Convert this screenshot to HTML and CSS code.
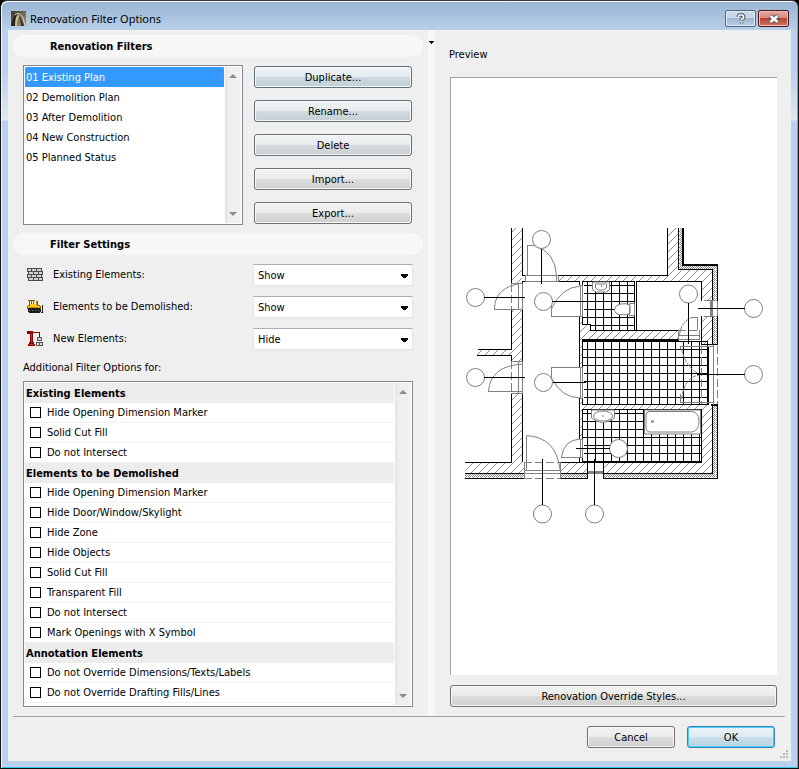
FILE: index.html
```
<!DOCTYPE html>
<html lang="en">
<head>
<meta charset="utf-8">
<title>Renovation Filter Options</title>
<link rel="stylesheet" href="styles.css">
</head>
<body>
<main class="window">
  <header class="titlebar">
    <svg class="app-icon" viewBox="0 0 15 15" aria-hidden="true">
      <defs><linearGradient id="app" x2="1" y2="1"><stop offset="0" stop-color="#3c3630"/><stop offset=".5" stop-color="#75684f"/><stop offset="1" stop-color="#a3977c"/></linearGradient></defs>
      <path fill="url(#app)" d="M0 0h15v15H0z"/>
      <path fill="#28231e" d="M0 15C1 8 3 3 7 3c-2 3-3 8-3 12z"/>
      <path fill="#c9bb96" d="M4 15C4 9 5 5 7 3c1 1 1 2 1 3-1 2-2 5-2 9z"/>
      <path fill="#3a332a" d="M8 5c2 2 4 6 5 10h-3C10 11 9 8 8 5z"/>
      <path fill="none" stroke="#e6dcc0" d="M4 4c2-2 4-2 6 0s3 6 4 11"/>
    </svg>
    <h1 class="title">Renovation Filter Options</h1>
    <button class="caption-button" type="button" aria-label="Help">
      <svg viewBox="0 0 12 12" aria-hidden="true"><path d="M3.500 4V3l1-1h3l1 1v2L6.500 6.500v1M6.500 9.500v1" fill="none" stroke="#4d5568" stroke-width="3.600"/><path d="M3.500 4V3l1-1h3l1 1v2L6.500 6.500v1M6.500 9.500v1" fill="none" stroke="#fff" stroke-width="1.600"/></svg>
    </button>
    <button class="caption-button caption-close" type="button" aria-label="Close">
      <svg viewBox="0 0 12 12" aria-hidden="true"><path d="M2 3l8 6M10 3l-8 6" fill="none" stroke="#5a5261" stroke-width="4.800"/><path d="M2.500 3l7 6M9.500 3l-7 6" fill="none" stroke="#fff" stroke-width="2.600"/></svg>
    </button>
  </header>

  <form class="client">
    <div class="panes">
      <section class="settings">
        <h2 class="section-title">Renovation Filters</h2>
        <div class="filters">
          <div class="listbox">
            <select class="filter-list" size="7" aria-label="Renovation Filters">
              <option selected>01 Existing Plan</option>
              <option>02 Demolition Plan</option>
              <option>03 After Demolition</option>
              <option>04 New Construction</option>
              <option>05 Planned Status</option>
            </select>
            <div class="scrollbar" aria-hidden="true">
              <svg viewBox="0 0 8 4"><path class="arrow" d="M4 0l4 4H0z"/></svg>
              <svg viewBox="0 0 8 4"><path class="arrow" d="M0 0h8L4 4z"/></svg>
            </div>
          </div>
          <div class="actions">
            <button class="button button-hot" type="button">Duplicate...</button>
            <button class="button button-warm" type="button">Rename...</button>
            <button class="button button-mild" type="button">Delete</button>
            <button class="button" type="button">Import...</button>
            <button class="button" type="button">Export...</button>
          </div>
        </div>

        <h2 class="section-title">Filter Settings</h2>
        <div class="statuses">
          <div class="status">
            <svg class="status-icon" viewBox="0 0 16 16" shape-rendering="crispEdges" aria-hidden="true">
              <path fill="#4a4a4a" d="M0 1h15v4H0zM1 4h15v4H1zM0 7h15v4H0zM1 10h15v4H1z"/>
              <path fill="#d2d2d2" d="M1 2h3v2H1zM5 2h4v2H5zM10 2h4v2h-4zM2 5h4v2H2zM7 5h4v2H7zM12 5h3v2h-3zM1 8h3v2H1zM5 8h4v2H5zM10 8h4v2h-4zM2 11h4v2H2zM7 11h4v2H7zM12 11h3v2h-3z"/>
            </svg>
            <label for="existing">Existing Elements:</label>
            <select class="dropdown" id="existing"><option selected>Show</option><option>Hide</option></select>
          </div>
          <div class="status">
            <svg class="status-icon" viewBox="0 0 16 16" shape-rendering="crispEdges" aria-hidden="true">
              <path fill="#8a5d00" d="M1 1h7v1H7v3h2V2h2v4h2v1h1v3H0V7h1V6h1V2H1z"/>
              <path fill="#ffc726" d="M1 7h12v2H1zM3 5h7v2H3z"/>
              <path fill="#fff3c0" d="M3 2h1v3H3zM5 2h1v3H5z"/>
              <path fill="#c98c00" d="M9 3h1v3H9zM2 8h11v1H2z"/>
              <path fill="#1c1c1c" d="M1 9h12v1h1v3h-1v1H2v-1H1zM15 6h1v8h-2v-1h1z"/>
              <path fill="#777" d="M2 11h1v1H2zM5 11h1v1H5zM8 11h1v1H8zM11 11h1v1h-1z"/>
            </svg>
            <label for="demolished">Elements to be Demolished:</label>
            <select class="dropdown" id="demolished"><option selected>Show</option><option>Hide</option></select>
          </div>
          <div class="status">
            <svg class="status-icon" viewBox="0 0 16 16" shape-rendering="crispEdges" aria-hidden="true">
              <path fill="#8e0000" d="M0 0h6v1h7v5h-1V2H6v9h1v2h1v2H1v-2h1v-2h1V3H0z"/>
              <path fill="#f01818" d="M4 2h1v10H4zM2 13h5v1H2z"/>
              <path fill="#555" d="M10 6h5v4h-5zM9 11h7v4H9z"/>
              <path fill="#d8d8d8" d="M11 7h3v2h-3zM10 12h2v2h-2zM13 12h2v2h-2z"/>
            </svg>
            <label for="new">New Elements:</label>
            <select class="dropdown" id="new"><option>Show</option><option selected>Hide</option></select>
          </div>
        </div>

        <p class="options-label">Additional Filter Options for:</p>
        <div class="listbox options-box">
          <div class="options">
            <h3 class="group">Existing Elements</h3>
            <label class="option"><input type="checkbox">Hide Opening Dimension Marker</label>
            <label class="option"><input type="checkbox">Solid Cut Fill</label>
            <label class="option"><input type="checkbox">Do not Intersect</label>
            <h3 class="group">Elements to be Demolished</h3>
            <label class="option"><input type="checkbox">Hide Opening Dimension Marker</label>
            <label class="option"><input type="checkbox">Hide Door/Window/Skylight</label>
            <label class="option"><input type="checkbox">Hide Zone</label>
            <label class="option"><input type="checkbox">Hide Objects</label>
            <label class="option"><input type="checkbox">Solid Cut Fill</label>
            <label class="option"><input type="checkbox">Transparent Fill</label>
            <label class="option"><input type="checkbox">Do not Intersect</label>
            <label class="option"><input type="checkbox">Mark Openings with X Symbol</label>
            <h3 class="group">Annotation Elements</h3>
            <label class="option"><input type="checkbox">Do not Override Dimensions/Texts/Labels</label>
            <label class="option"><input type="checkbox">Do not Override Drafting Fills/Lines</label>
          </div>
          <div class="scrollbar" aria-hidden="true">
            <svg viewBox="0 0 8 4"><path class="arrow" d="M4 0l4 4H0z"/></svg>
            <svg viewBox="0 0 8 4"><path class="arrow" d="M0 0h8L4 4z"/></svg>
          </div>
        </div>
      </section>

      <div class="splitter" aria-hidden="true">
        <svg viewBox="0 0 5 3" shape-rendering="crispEdges"><path d="M0 0h5v1H0zM1 1h3v1H1zM2 2h1v1H2z"/></svg>
      </div>

      <section class="preview">
        <h2 class="preview-title">Preview</h2>
        <div class="canvas">
          <svg class="plan" viewBox="464 228 301 297" role="img" aria-label="Floor plan">
            <defs>
              <pattern id="hatch" width="8" height="8" patternUnits="userSpaceOnUse"><path d="M-1 9L9-1M-1 1L1-1M7 9l2-2" stroke="#909090" stroke-width="1" shape-rendering="crispEdges"/></pattern>
              <pattern id="insulation" width="4" height="4" patternUnits="userSpaceOnUse"><path fill="#8c8c8c" d="M0 0h1v1H0zM2 0h1v1H2zM1 1h1v1H1zM2 2h1v1H2zM0 2h1v1H0zM3 3h1v1H3zM1 3h1v1H1z"/></pattern>
              <pattern id="tiles" x="587" y="285" width="8" height="8" patternUnits="userSpaceOnUse"><path d="M0 0h8v1H0zM0 0h1v8H0z"/></pattern>
            </defs>
            <g shape-rendering="crispEdges">
              <g fill="url(#hatch)">
                <path d="M511 228h11v55h-11zM511 310h11v51h-11zM511 394h11v69h-11zM477 349h34v6h-34z"/>
                <path d="M558 275h110v6H558zM667 228h11v41h34v32h-11v-20h-34zM701 316h11v29h-11v-15"/>
                <path d="M579 317h3v7h8v6h88v10h-96v27h-3zM579 398h3v6h120v-59h0v59h10v69H603v-11h98v-53H582v30h-3zM466 463h58v10h-58zM561 463h26v10h-26z"/>
              </g>
              <path fill="#fff" d="M702 346h6v58h-6z"/>
              <g fill="url(#insulation)">
                <path d="M679 228h4v37h34v36h-4v-31h-34zM713 316h4v29h-4zM713 405h4v73H603v-4h110zM465 474h60v4h-60zM561 474h26v4h-26z"/>
              </g>
              <path fill="url(#tiles)" d="M583 282h52v48h-45v-6h-7zM583 341h125v63H583zM583 410h118v51H583z"/>
              <g fill="none" stroke="#000">
                <path d="M511.500 228v55M511.500 310v39h-34M477 355.500h34.500V361M511.500 394v68.500H465M522.500 228v47.500h3M525 281.500h-3v2M522.500 310v51M522.500 394v68"/>
                <path d="M558.500 275.500h109V228M557 281.500h22.500v3M579.500 317v50M579.500 398v41M579.500 457v5M678.500 228v41.500h34V301"/>
                <path d="M582.500 285v-3.500h52V330M636.500 281.500h65v19M636.500 281v49M582.500 317v7.500h8v6h88M582.500 367v-26.500h96M582.500 398v6.500h126M582.500 439v-29.500h119v52H582v-4M636 330.500h42M701.500 316v28.500h16V316M712.500 316v28M717.500 301V264"/>
                <path d="M465 473.500h60M465 478.500h60M561 462.500h26v16h-26M561 473.500h26M603 478.500h114.500v-74M603 473.500h109.500v-69h5M603.500 478v-16h98"/>
                <path stroke-width="2" d="M683 228v37h35M582 340h97M708 346v59M582 462h120M711 405h7"/>
              </g>
              <path fill="#fff" d="M580 285h4v32h-4zM580 367h4v31h-4zM580 439h4v18h-4z"/>
              <g fill="none" stroke="#808080">
                <path d="M525.500 275.500h33v6h-33zM556.500 275v6M518.500 283v27M522.500 283v27M511 283.500h11M494 309.500h28M518.500 361v33M522.500 361v33M511 361.500h11M488 391.500h34M511 393.500h11"/>
                <path d="M580.500 285.500h2v31h-2zM580.500 367.500h2v31h-2zM580.500 439.500h2v18h-2zM551.500 304v12.500h31M551.500 379v-11.500h31M561 457.500h21"/>
                <path d="M527.500 275v-29.500h9M526.500 470v-34.500M524.500 462v16M560.500 462v16M524 470.500h36M524 473.500h37"/>
                <path d="M697.500 330v-12.500h-7M678.500 330v9.500h21V330M678 335.500h21M680.500 349v-2.500h33M680.500 394v8.500h33M713.500 345v60M717.500 301v15M704 300.500h10M704 316.500h10"/>
                <path stroke-dasharray="8 3" d="M511.500 284v26M511.500 361v33M524 462.500h37M524 478.500h37M701.500 346v58M717.500 346v58M678 330.500h21"/>
                <path stroke-width="3" d="M711.500 301v15M588 472.500h15"/>
              </g>
            </g>
            <g fill="none" stroke="#808080">
              <path d="M535 246q20 6 21.500 29M494.500 309q0-22 28-26M488.500 391q2-25 34-27M551.500 309q10-22 29-23M551.500 378q10 20 29 20M526.500 435.500q30 2 33.500 34M561.500 457q2-17 19-18"/>
              <path stroke-dasharray="4 1" d="M679.500 335q2-14 12-17M681.500 349q5 20 18 25M681.500 399q3-22 18-24"/>
            </g>
            <g fill="#fff" stroke="#808080">
              <path d="M592.500 282v8l4 2h9l4-2v-8z"/><path d="M595.500 284h11v4l-3 2h-5l-3-2z"/><path d="M601.500 285v2"/>
              <path d="M591.500 410v8q11 9 23 0v-8z"/><ellipse cx="603" cy="416" rx="9.500" ry="5"/><path d="M602 416h2"/>
              <path d="M629.500 303.500h5v12h-5zM630 305.500q-4-3-11-1-4 1-4.500 5 0 4 4.500 5 7 1 11-1z"/>
              <path d="M644.500 410h56v24h-56z"/><path d="M649 411.500h43q7 1 7 10t-7 10.500h-43q-3-1-3-4v-13q0-3 3-3.500z"/>
              <path d="M651 421.500h3" stroke-width="2"/>
              <circle cx="541.500" cy="239.500" r="9"/><circle cx="475.500" cy="297.500" r="9"/><circle cx="543.500" cy="301.500" r="9"/><circle cx="688.500" cy="294" r="9"/><circle cx="753.500" cy="308.500" r="9"/><circle cx="475.500" cy="377.500" r="9"/><circle cx="543.500" cy="382.500" r="9"/><circle cx="753.500" cy="374.500" r="9"/><circle cx="618.500" cy="448.500" r="9"/><circle cx="542.500" cy="514" r="9"/><circle cx="594.500" cy="514" r="9"/>
            </g>
            <g fill="none" stroke="#000" shape-rendering="crispEdges">
              <path d="M541.500 249v35M484 297.500h41M552 301.500h34M688.500 303v41M698 308.500h47M484 377.500h41M553 382.500h33M700 374.500h45M576 448.500h34M542.500 459v46M594.500 459v46"/>
              <path stroke-width="2" d="M697 374h4"/>
            </g>
          </svg>
        </div>
        <button class="button" type="button">Renovation Override Styles...</button>
      </section>
    </div>

    <footer class="footer">
      <button class="button" type="button">Cancel</button>
      <button class="button button-default" type="submit">OK</button>
      <svg class="grip" viewBox="0 0 8 8" shape-rendering="crispEdges" aria-hidden="true"><path fill="#b8b8b8" d="M6 0h2v2H6zM3 3h2v2H3zM6 3h2v2H6zM0 6h2v2H0zM3 6h2v2H3zM6 6h2v2H6z"/></svg>
    </footer>
  </form>
</main>
</body>
</html>
```
FILE: styles.css
```
* {
  box-sizing: border-box;
}

body {
  margin: 0;
  background: #000;
  color: #000;
  font: 11px/20px "DejaVu Sans Condensed", "DejaVu Sans", sans-serif;
}

h1,
h2,
h3,
p {
  margin: 0;
  font-size: inherit;
}

button,
select,
input {
  margin: 0;
  color: inherit;
  font: inherit;
}

/* Window frame */
.window {
  display: flex;
  flex-direction: column;
  min-height: 100vh;
  padding: 0 7px 7px;
  border: 1px solid #111;
  border-top-color: #3a3a42;
  border-radius: 7px 7px 0 0;
  background: linear-gradient(#98b4d2 0, #b9d1ea 30px, #b9d1ea 70px, #dde9f5 119px, #b9d1ea 120px);
  box-shadow: inset 1px 1px #f4f8fc, inset -1px -1px #35c5e0;
}

.titlebar {
  display: flex;
  align-items: center;
  gap: 2px;
  height: 29px;
  padding: 6px 2px 0 3px;
}

.app-icon {
  width: 15px;
  height: 15px;
}

.title {
  flex: 1;
  padding-left: 2px;
  font: 11px/16px "Noto Sans", "Open Sans", sans-serif;
}

.caption-button {
  display: grid;
  place-items: center;
  width: 31px;
  height: 17px;
  padding: 0;
  border: 1px solid #56687f;
  border-radius: 2px;
  background: linear-gradient(#c6d7e9 50%, #9fb9d4 50%, #b9cee4);
  box-shadow: inset 0 0 0 1px #dfeaf5;
}

.caption-close {
  border-color: #4a1520;
  background: linear-gradient(#e5a79c, #d88a7c 50%, #b8402c 50%, #d07c64);
  box-shadow: inset 0 0 0 1px #ecc0b6;
}

.caption-button svg {
  width: 12px;
  height: 12px;
}

.client {
  display: flex;
  flex: 1;
  flex-direction: column;
  background: #efefef;
}

.panes {
  display: grid;
  flex: 1;
  grid-template-columns: 420fr 7px 356fr;
}

/* Left pane */
.settings {
  display: flex;
  flex-direction: column;
  padding: 5px 5px 9px;
}

.section-title {
  padding: 1px 0 0 37px;
  border-radius: 11px;
  background: #f7f7f7;
  font-weight: bold;
  line-height: 21px;
}

.filters {
  display: grid;
  grid-template-columns: 220fr 158fr;
  gap: 11px;
  padding: 8px 11px 8px 10px;
}

.listbox {
  display: flex;
  padding: 1px;
  border: 1px solid #828790;
  background: #fff;
}

.filter-list {
  flex: 1;
  min-width: 0;
  height: 156px;
  padding: 0;
  border: 0;
  outline: 0;
  background: #fff;
  overflow: hidden;
}

.filter-list option {
  min-height: 20px;
  padding: 4px 1px 0;
}

.filter-list option:checked {
  outline: 1px dotted #d0802c;
  outline-offset: -1px;
  background: linear-gradient(#3399ff, #3399ff);
  color: #fff;
}

.scrollbar {
  display: flex;
  flex-direction: column;
  justify-content: space-between;
  align-items: center;
  width: 17px;
  padding: 7px 0;
  border-left: 1px solid #fff;
  background: linear-gradient(90deg, #e3e3e3, #efefef 4px, #f0f0f0 14px, #f7f7f7);
}

.scrollbar svg {
  width: 8px;
  height: 4px;
}

.arrow {
  fill: #8a8a8a;
}

.actions {
  display: flex;
  flex-direction: column;
  gap: 12px;
  padding-top: 1px;
}

.button {
  height: 22px;
  padding: 1px 8px 0;
  border: 1px solid #707070;
  border-radius: 3px;
  background: linear-gradient(#f2f2f2, #ebebeb 50%, #dddddd 50%, #cfcfcf);
  box-shadow: inset 0 0 0 1px #f8f8f8;
  line-height: 19px;
}

.button-hot {
  border-color: #5c6f7b;
  background: linear-gradient(#eff4f6, #e2ebef 50%, #cddbe1 50%, #bfd0d7);
}

.button-warm {
  border-color: #627078;
  background: linear-gradient(#f0f4f5, #e5ebed 50%, #d2dbdf 50%, #c4cfd4);
}

.button-mild {
  border-color: #687075;
  background: linear-gradient(#f1f3f4, #e8ebec 50%, #d8dcde 50%, #cacfd1);
}

.button-default {
  border-color: #3c7fb1;
  background: linear-gradient(#eaf3f8, #deebf3 50%, #c9dfec 50%, #b8d4e4);
  box-shadow: inset 0 0 0 1px #46d4fa;
}

.statuses {
  display: flex;
  flex-direction: column;
  gap: 10px;
  padding: 9px 10px 0 14px;
}

.status {
  display: grid;
  grid-template-columns: 26px 200fr 160fr;
  align-items: center;
}

.status label {
  line-height: 22px;
}

.status-icon {
  width: 16px;
  height: 16px;
}

.dropdown {
  width: 100%;
  height: 22px;
  padding: 1px 4px 0;
  border: 1px solid #e2e3ea;
  border-top-color: #abadb3;
  border-radius: 0;
  appearance: none;
  background:
    linear-gradient(#000, #000) right 4px top 9px / 7px 2px no-repeat,
    linear-gradient(#000, #000) right 5px top 11px / 5px 1px no-repeat,
    linear-gradient(#000, #000) right 6px top 12px / 3px 1px no-repeat,
    #fff;
}

.options-label {
  padding: 8px 10px 3px;
}

.options-box {
  flex: 1;
  margin: 0 10px;
}

.options {
  flex: 1;
}

.group {
  height: 20px;
  padding: 1px 0 0 1px;
  background: #ececec;
  line-height: 19px;
}

.option {
  display: flex;
  align-items: center;
  gap: 6px;
  height: 20px;
  padding-left: 5px;
  border-bottom: 1px solid #f0f0f0;
  line-height: 18px;
}

.option input {
  width: 11px;
  height: 11px;
  border: 1px solid #000;
  appearance: none;
  background: #fff;
}

.option input:checked {
  background: #3399ff;
}

.splitter {
  padding-top: 9px;
  background: #f7f7f7;
  text-align: center;
  line-height: 3px;
}

.splitter svg {
  width: 5px;
  height: 3px;
}

/* Right pane */
.preview {
  display: flex;
  flex-direction: column;
  padding: 15px 14px 9px 15px;
}

.preview-title {
  margin-left: -1px;
  font-weight: normal;
}

.canvas {
  display: flex;
  flex: 1;
  align-items: center;
  justify-content: center;
  margin: 12px 0 10px;
  border: solid #a0a0a0;
  border-width: 1px 0 0 1px;
  background: #fff;
}

.plan {
  width: 95%;
  max-width: 301px;
}

/* Footer */
.footer {
  display: flex;
  gap: 12px;
  justify-content: flex-end;
  margin: 0 6px 0 5px;
  padding: 9px 0 3px;
  border-top: 1px solid #a0a0a0;
}

.footer .button {
  width: 88px;
  margin-bottom: 10px;
}

.grip {
  align-self: flex-end;
  width: 8px;
  height: 8px;
  margin: 0 -3px 0 -7px;
}
```
